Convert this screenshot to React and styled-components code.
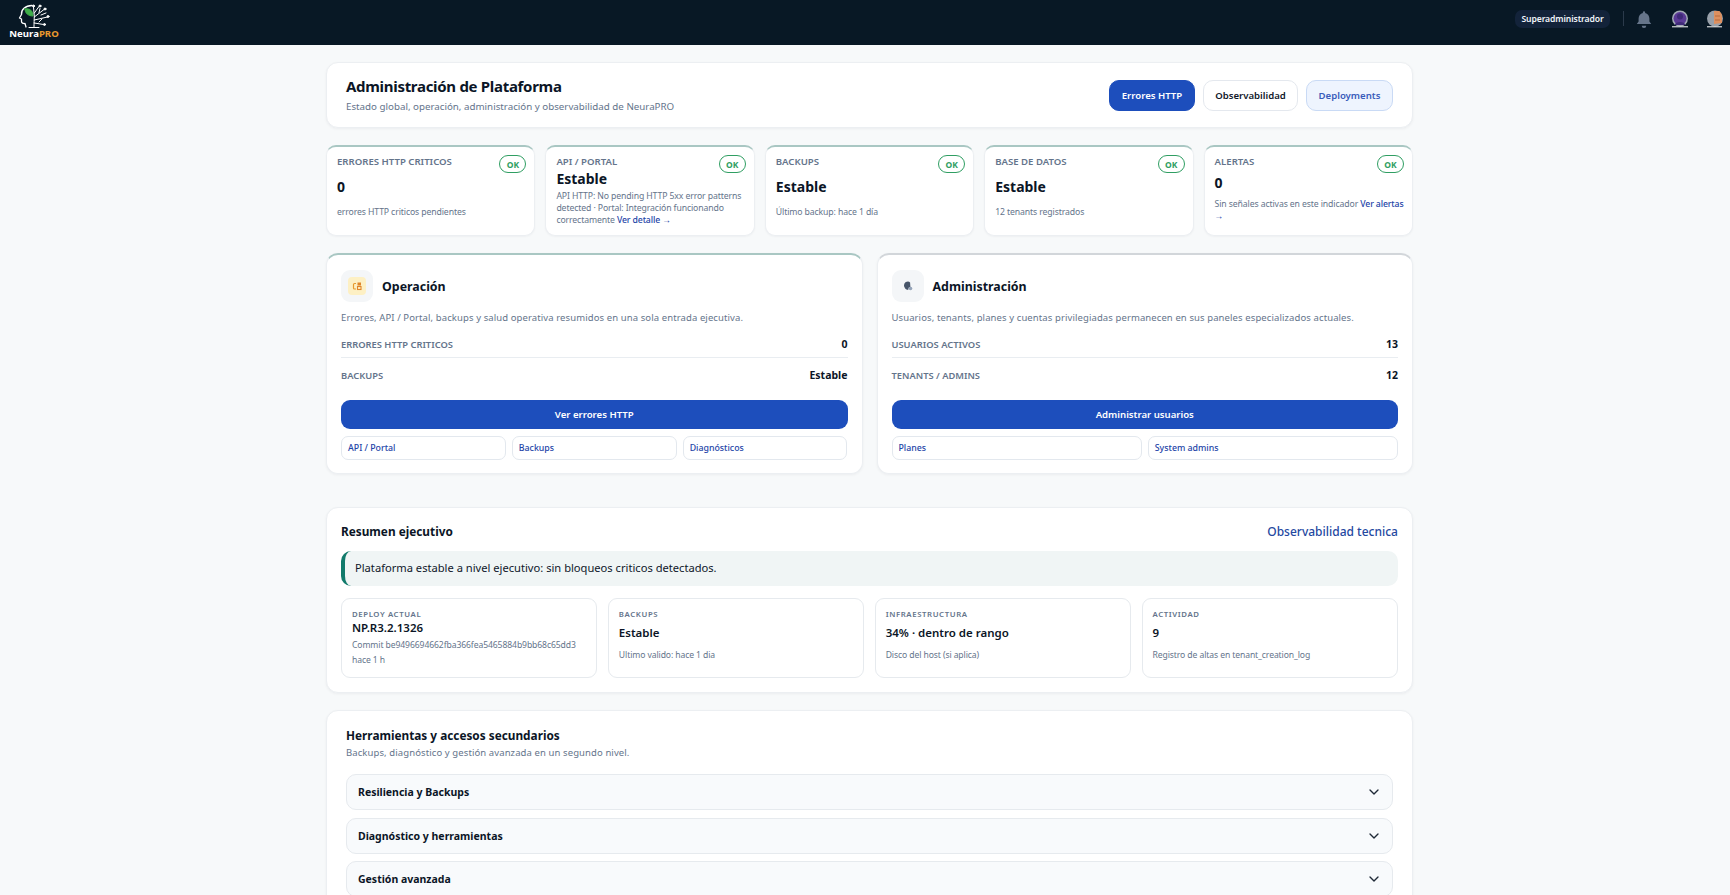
import React from "react";
import styled, { createGlobalStyle } from "styled-components";
import { ChevronDown } from "lucide-react";

const Global = createGlobalStyle`
  html, body { margin: 0; padding: 0; height: 895px; overflow: hidden; background: #f7f9fa; }
  * { box-sizing: border-box; }
  body { font-family: "Noto Sans", "Liberation Sans", sans-serif; color: #0f172a; }
`;

const Page = styled.div`display:flex;flex-direction:column;width:1730px;`;

const TopBar = styled.header`
  height:45px;background:#081825;display:flex;align-items:center;justify-content:space-between;
  padding:0 6px 0 10px;flex:none;
`;
const Brand = styled.div`display:flex;flex-direction:column;align-items:center;width:48px;margin-bottom:3px;`;
const BrandName = styled.div`font-size:9.6px;font-weight:700;line-height:12px;color:#fff;margin-top:-1px;white-space:nowrap;
  span{color:#e8982e;}`;
const TopRight = styled.div`display:flex;align-items:center;margin-bottom:8px;`;
const RolePill = styled.div`
  width:95px;height:18px;border-radius:7px;background:#13233a;color:#f1f5f9;font-size:8.6px;font-weight:600;
  display:flex;align-items:center;justify-content:center;white-space:nowrap;letter-spacing:-.1px;
`;
const Divider = styled.div`width:1px;height:15px;background:#2b3a4b;margin:0 11px 0 13px;`;
const IconSlot = styled.div`display:flex;align-items:center;margin-right:${p=>p.$gap}px;`;

const Main = styled.main`
  width:1087px;margin-left:326px;padding-top:17px;display:flex;flex-direction:column;gap:17px;
`;
const Card = styled.section`
  background:#fff;border:1px solid #eceff2;border-radius:12px;box-shadow:0 1px 3px rgba(15,23,42,.05);
`;
const Hero = styled(Card)`
  height:66px;display:flex;align-items:center;justify-content:space-between;padding:0 19px 0 19px;
`;
const HeroText = styled.div`margin-bottom:2px;`;
const HeroTitle = styled.h1`margin:0;font-size:15px;line-height:22px;font-weight:700;color:#0b1526;letter-spacing:-.3px;`;
const HeroSub = styled.p`margin:3px 0 0;font-size:9.75px;line-height:14px;color:#64748b;`;
const HeroActions = styled.div`display:flex;gap:8px;`;
const HeroBtn = styled.button`
  height:31px;width:${p=>p.$w}px;border-radius:10px;font:600 9.6px "Noto Sans",sans-serif;padding:0;
  background:${p=>p.$kind==="primary"?"#1d4ebc":p.$kind==="soft"?"#eef4fe":"#fff"};
  color:${p=>p.$kind==="primary"?"#fff":p.$kind==="soft"?"#3a5dbb":"#0f172a"};
  border:1px solid ${p=>p.$kind==="primary"?"#1d4ebc":p.$kind==="soft"?"#c9daf5":"#e4e8ee"};
`;

const KpiGrid = styled.div`display:grid;grid-template-columns:repeat(5,minmax(0,1fr));gap:10px;`;
const Kpi = styled.article`
  position:relative;height:91px;background:#fff;border:1px solid #eceff2;border-top:2px solid #a9c7c3;border-radius:10px;
  padding:8px 7px 8px 10px;display:flex;flex-direction:column;box-shadow:0 1px 2px rgba(15,23,42,.04);
`;
const KpiLabel = styled.div`font-size:9.6px;line-height:13px;font-weight:600;color:#64748b;text-transform:uppercase;white-space:nowrap;`;
const KpiBody = styled.div`flex:1;display:flex;flex-direction:column;justify-content:space-evenly;min-height:0;`;
const KpiValue = styled.div`font-size:14px;line-height:20px;font-weight:700;color:#0b1526;`;
const KpiDesc = styled.div`font-size:8.7px;line-height:12px;color:#64748b;letter-spacing:-.12px;`;
const Link = styled.a`color:#1e45a8;font-weight:500;`;
const OkBadge = styled.span`
  position:absolute;top:8px;right:8px;width:27px;height:18px;border:1px solid #2f9e62;border-radius:9px;
  display:flex;align-items:center;justify-content:center;font-size:8.5px;font-weight:700;color:#2f9e62;
`;

const PanelGrid = styled.div`display:grid;grid-template-columns:repeat(2,minmax(0,1fr));gap:14px;`;
const Panel = styled.article`
  background:#fff;border:1px solid #eceff2;border-top:2px solid ${p=>p.$accent};border-radius:12px;
  padding:15px 14px 14px;box-shadow:0 1px 3px rgba(15,23,42,.05);height:221px;
`;
const PanelHead = styled.div`display:flex;align-items:center;gap:9px;`;
const PanelIcon = styled.div`width:32px;height:32px;border-radius:9px;background:#f4f6f8;display:flex;align-items:center;justify-content:center;`;
const PanelTitle = styled.h2`margin:1px 0 0;font-size:12.4px;line-height:18px;font-weight:700;color:#0b1526;`;
const PanelDesc = styled.p`margin:9px 0 12px;font-size:9.5px;line-height:14px;color:#64748b;letter-spacing:.1px;white-space:nowrap;`;
const Rows = styled.div`display:flex;flex-direction:column;gap:10px;margin-bottom:18px;`;
const Row = styled.div`
  display:flex;justify-content:space-between;align-items:center;height:14px;
  &:first-child{box-sizing:content-box;padding-bottom:6px;border-bottom:1px solid #e9edf1;}
`;
const RowLabel = styled.span`font-size:9.35px;font-weight:600;color:#64748b;text-transform:uppercase;`;
const RowValue = styled.span`font-size:10.5px;font-weight:700;color:#0b1526;`;
const PrimaryBtn = styled.button`
  display:block;width:100%;height:29px;border:0;border-radius:9px;background:#1d4ebc;color:#fff;
  font:600 9.6px "Noto Sans",sans-serif;
`;
const SubGrid = styled.div`display:grid;grid-template-columns:repeat(${p=>p.$n},minmax(0,1fr));gap:6px;margin-top:7px;`;
const SubBtn = styled.button`
  height:24px;border:1px solid #e3e8ee;border-radius:7px;background:#fff;color:#1e45a8;text-align:left;padding:0 6px;
  font:500 8.8px "Noto Sans",sans-serif;
`;

const Summary = styled(Card)`margin-top:16px;height:186px;padding:13px 14px 14px;`;
const SummaryHead = styled.div`display:flex;justify-content:space-between;align-items:center;height:20px;`;
const SectionTitle = styled.h2`margin:0;font-size:11.8px;line-height:20px;font-weight:700;color:#0b1526;`;
const SummaryLink = styled.a`font-size:12px;color:#24489f;font-weight:500;`;
const Notice = styled.div`
  height:35px;margin-top:10px;background:#f0f5f5;border-left:4px solid #117a6b;border-radius:10px;
  display:flex;align-items:center;padding:0 0 2px 10px;font-size:11.15px;color:#0f172a;
`;
const SummaryGrid = styled.div`display:grid;grid-template-columns:repeat(4,minmax(0,1fr));gap:10.4px;margin-top:12px;`;
const Tile = styled.article`
  height:80px;border:1px solid #e6eaee;border-radius:9px;padding:10px 10px 8px;display:flex;flex-direction:column;
`;
const TileLabel = styled.div`font-size:7.8px;line-height:10px;font-weight:600;letter-spacing:.6px;color:#64748b;text-transform:uppercase;`;
const TileBody = styled.div`flex:1;display:flex;flex-direction:column;justify-content:space-evenly;min-height:0;`;
const TileValue = styled.div`font-size:11.5px;line-height:16px;font-weight:600;color:#0b1526;`;
const TileDesc = styled.div`font-size:8.6px;line-height:15px;color:#64748b;white-space:nowrap;letter-spacing:-.1px;`;

const Tools = styled(Card)`padding:14px 19px 0;height:300px;`;
const ToolsSub = styled.p`margin:1px 0 14px;font-size:9.5px;line-height:14px;color:#64748b;letter-spacing:.1px;`;
const Accordion = styled.div`display:flex;flex-direction:column;gap:7.6px;`;
const AccordionRow = styled.div`
  height:36px;background:#f8fafc;border:1px solid #e6eaee;border-radius:10px;display:flex;align-items:center;
  justify-content:space-between;padding:0 10px 0 11px;font-size:10.5px;font-weight:700;color:#0b1526;
`;

const Logo = () => (
  <svg width="32" height="26" viewBox="0 0 32 26" fill="none" stroke="#fff" strokeWidth="1" strokeLinecap="round" strokeLinejoin="round">
    <path d="M14 2.500C7 2.500 3 7 3.500 11.500L1.500 15l2 1v2.500c0 1.500 1.500 2.200 3.500 2L8 24" strokeWidth="1.300" />
    <path d="M7 6c5-1 8 2 8 7C10 13 7 10 7 6z" fill="#3fae49" stroke="#3fae49" />
    <path d="M16 24c0-4 .2-7 .3-11L15.500 4M16.300 10L21 3.500M16.300 14L26 6.500M16.300 17L29.500 14M16.200 20L25.500 21.500M21 9.500L22 5.500M23 12L28 10M21 19l3-3" />
    <circle cx="15.500" cy="3" r="1" fill="#fff" />
    <circle cx="22" cy="3" r="1" fill="#fff" />
    <circle cx="27" cy="6" r="1" fill="#fff" />
    <circle cx="30" cy="13.500" r="1" fill="#fff" />
    <circle cx="26.500" cy="21.500" r="1" fill="#fff" />
    <path d="M11 24.500h10" />
  </svg>
);
const Bell = () => (
  <svg width="18" height="18" viewBox="0 0 16 16" fill="#66758a">
    <path d="M8 1a1 1 0 0 1 1 1v.6c2.400.5 3.800 2.500 3.800 5v2.600l1.600 2.300H1.600l1.600-2.300V7.600c0-2.500 1.400-4.500 3.800-5V2a1 1 0 0 1 1-1z" />
    <path d="M6 14h4a2 2 0 0 1-4 0z" />
  </svg>
);
const AvatarPurple = () => (
  <svg width="18" height="18" viewBox="0 0 18 18">
    <circle cx="9" cy="8.500" r="8" fill="#a3aab6" />
    <circle cx="9" cy="8.500" r="6.500" fill="#5a3a95" />
    <circle cx="9" cy="6.500" r="3" fill="#3f2a78" />
    <path d="M3.500 15c1-4 10-4 11 0z" fill="#3f2a78" />
    <path d="M1 16.800h16" stroke="#fff" strokeWidth="1" />
  </svg>
);
const AvatarOrange = () => (
  <svg width="18" height="18" viewBox="0 0 18 18">
    <circle cx="9" cy="8.500" r="8" fill="#98a0aa" />
    <path d="M8 1h5.500a8 8 0 0 1 2.500 6v6l-8 1z" fill="#dd9060" />
    <path d="M9 6h5M9 10h5" stroke="#b76a3c" strokeWidth="1" />
    <path d="M1 16.800h15" stroke="#fff" strokeWidth="1" />
  </svg>
);
const OpsIcon = () => (
  <svg width="18" height="18" viewBox="0 0 18 18">
    <rect width="18" height="18" rx="4" fill="#fdf0c4" />
    <path d="M8 6.500H6.500a1 1 0 0 0-1 1v3.500a1 1 0 0 0 1 1H8" fill="none" stroke="#e69a2e" strokeWidth="1.200" />
    <rect x="9.500" y="5.500" width="3.500" height="3" fill="#e0862a" />
    <rect x="9.500" y="9.500" width="3.500" height="3" fill="none" stroke="#e0862a" strokeWidth="1.100" />
  </svg>
);
const AdminIcon = () => (
  <svg width="18" height="18" viewBox="0 0 18 18">
    <path d="M9 4.500a4 4 0 0 0-3 6.700c.8.900 2 1.600 3.200 1.800l.6-2.500 1.600-.5-.3-4.500A4 4 0 0 0 9 4.500z" fill="#475569" />
    <circle cx="11.500" cy="11.500" r="1.800" fill="#94a3b8" />
  </svg>
);

const kpis = [
  { label: "Errores HTTP criticos", value: "0", desc: "errores HTTP criticos pendientes" },
  { label: "API / Portal", value: "Estable", desc: "API HTTP: No pending HTTP 5xx error patterns detected · Portal: Integración funcionando correctamente ", link: "Ver detalle →" },
  { label: "Backups", value: "Estable", desc: "Último backup: hace 1 día" },
  { label: "Base de datos", value: "Estable", desc: "12 tenants registrados" },
  { label: "Alertas", value: "0", desc: "Sin señales activas en este indicador ", link: "Ver alertas →" },
];
const panels = [
  { title: "Operación", accent: "#a9c7c3", icon: <OpsIcon />, desc: "Errores, API / Portal, backups y salud operativa resumidos en una sola entrada ejecutiva.",
    rows: [["Errores HTTP criticos", "0"], ["Backups", "Estable"]], cta: "Ver errores HTTP", subs: ["API / Portal", "Backups", "Diagnósticos"] },
  { title: "Administración", accent: "#d2d6da", icon: <AdminIcon />, desc: "Usuarios, tenants, planes y cuentas privilegiadas permanecen en sus paneles especializados actuales.",
    rows: [["Usuarios activos", "13"], ["Tenants / Admins", "12"]], cta: "Administrar usuarios", subs: ["Planes", "System admins"] },
];
const tiles = [
  { label: "Deploy actual", value: "NP.R3.2.1326", desc: ["Commit be9496694662fba366fea5465884b9bb68c65dd3", "hace 1 h"] },
  { label: "Backups", value: "Estable", desc: ["Ultimo valido: hace 1 dia"] },
  { label: "Infraestructura", value: "34% · dentro de rango", desc: ["Disco del host (si aplica)"] },
  { label: "Actividad", value: "9", desc: ["Registro de altas en tenant_creation_log"] },
];

export default function App() {
  return (
    <Page>
      <Global />
      <TopBar>
        <Brand>
          <Logo />
          <BrandName>Neura<span>PRO</span></BrandName>
        </Brand>
        <TopRight>
          <RolePill>Superadministrador</RolePill>
          <Divider />
          <IconSlot $gap={18}><Bell /></IconSlot>
          <IconSlot $gap={17}><AvatarPurple /></IconSlot>
          <IconSlot $gap={0}><AvatarOrange /></IconSlot>
        </TopRight>
      </TopBar>
      <Main>
        <Hero>
          <HeroText>
            <HeroTitle>Administración de Plataforma</HeroTitle>
            <HeroSub>Estado global, operación, administración y observabilidad de NeuraPRO</HeroSub>
          </HeroText>
          <HeroActions>
            <HeroBtn $kind="primary" $w={86}>Errores HTTP</HeroBtn>
            <HeroBtn $w={95}>Observabilidad</HeroBtn>
            <HeroBtn $kind="soft" $w={87}>Deployments</HeroBtn>
          </HeroActions>
        </Hero>
        <KpiGrid>
          {kpis.map(k => (
            <Kpi key={k.label}>
              <KpiLabel>{k.label}</KpiLabel>
              <OkBadge>OK</OkBadge>
              <KpiBody>
                <KpiValue>{k.value}</KpiValue>
                <KpiDesc>{k.desc}{k.link && <Link>{k.link}</Link>}</KpiDesc>
              </KpiBody>
            </Kpi>
          ))}
        </KpiGrid>
        <PanelGrid>
          {panels.map(p => (
            <Panel key={p.title} $accent={p.accent}>
              <PanelHead>
                <PanelIcon>{p.icon}</PanelIcon>
                <PanelTitle>{p.title}</PanelTitle>
              </PanelHead>
              <PanelDesc>{p.desc}</PanelDesc>
              <Rows>
                {p.rows.map(([a, b]) => (
                  <Row key={a}><RowLabel>{a}</RowLabel><RowValue>{b}</RowValue></Row>
                ))}
              </Rows>
              <PrimaryBtn>{p.cta}</PrimaryBtn>
              <SubGrid $n={p.subs.length}>
                {p.subs.map(s => <SubBtn key={s}>{s}</SubBtn>)}
              </SubGrid>
            </Panel>
          ))}
        </PanelGrid>
        <Summary>
          <SummaryHead>
            <SectionTitle>Resumen ejecutivo</SectionTitle>
            <SummaryLink>Observabilidad tecnica</SummaryLink>
          </SummaryHead>
          <Notice>Plataforma estable a nivel ejecutivo: sin bloqueos criticos detectados.</Notice>
          <SummaryGrid>
            {tiles.map(t => (
              <Tile key={t.label}>
                <TileLabel>{t.label}</TileLabel>
                <TileBody>
                  <TileValue>{t.value}</TileValue>
                  <TileDesc>{t.desc.map(d => <div key={d}>{d}</div>)}</TileDesc>
                </TileBody>
              </Tile>
            ))}
          </SummaryGrid>
        </Summary>
        <Tools>
          <SectionTitle>Herramientas y accesos secundarios</SectionTitle>
          <ToolsSub>Backups, diagnóstico y gestión avanzada en un segundo nivel.</ToolsSub>
          <Accordion>
            {["Resiliencia y Backups", "Diagnóstico y herramientas", "Gestión avanzada"].map(a => (
              <AccordionRow key={a}>{a}<ChevronDown size={16} color="#1f2937" /></AccordionRow>
            ))}
          </Accordion>
        </Tools>
      </Main>
    </Page>
  );
}
